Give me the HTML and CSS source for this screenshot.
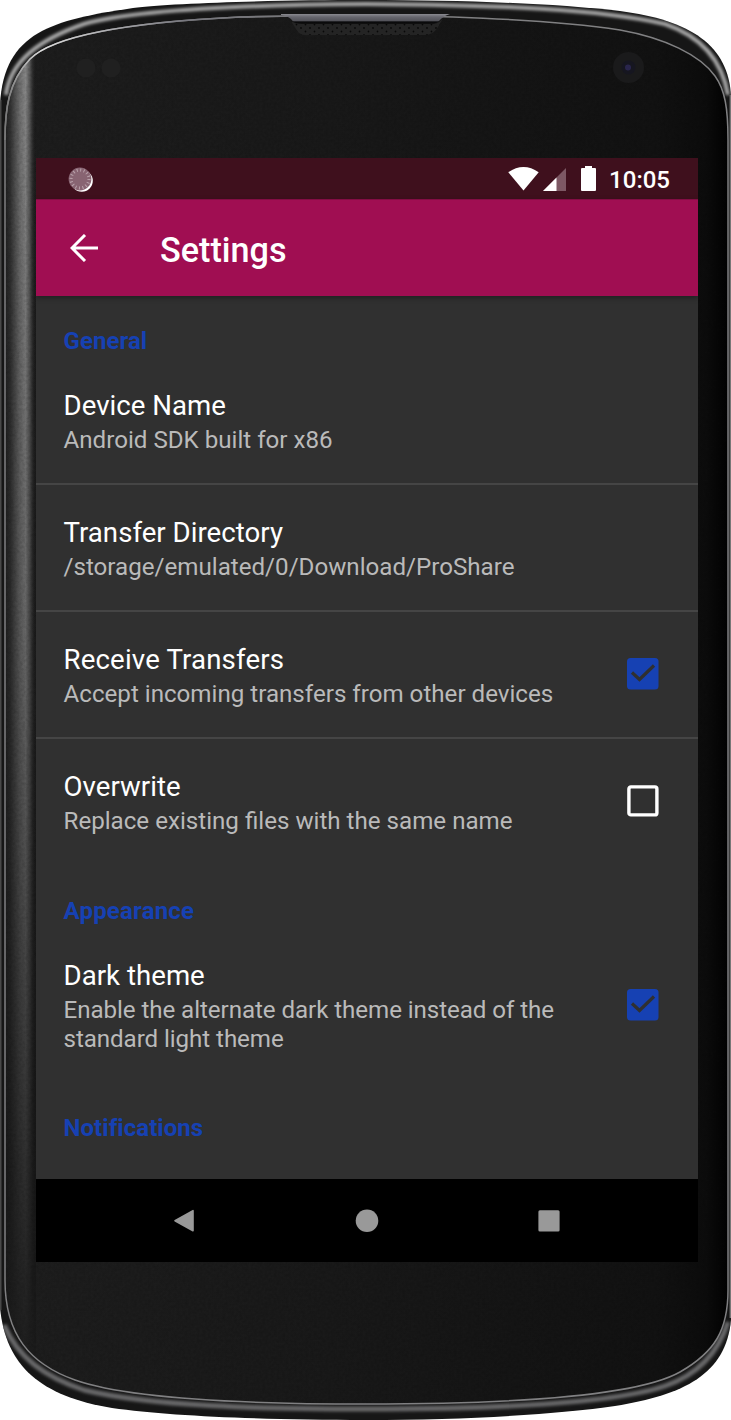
FILE: index.html
```html
<!DOCTYPE html>
<html lang="en">
<head>
<meta charset="utf-8">
<title>Settings</title>
<link rel="stylesheet" href="styles.css">
</head>
<body>
<div class="phone">
  <svg class="frame" viewBox="0 0 731 1420" aria-hidden="true">
    <defs>
      <clipPath id="body"><path d="M0 104C4 32 52 20 133 8C170 3 280 0 366 0C455 0 550 3 620 11C690 20 729 45 731 97V1320C726 1374 684 1395 615 1406C560 1414 470 1420 366 1420C260 1420 170 1416 112 1408C40 1396 6 1366 0 1308Z"/></clipPath>
      <path id="inner" d="M5 140C5 110 8 82 30 59C46 43 95 24 240 17C300 15.500 330 15.500 366 15.500C420 15.500 540 18 620 30C665 38 700 55 715 76C725 90 728 108 728 140V1290C728 1330 715 1352 680 1372C650 1389 570 1404 366 1404C220 1404 120 1396 75 1380C30 1364 5 1335 5 1280Z"/>
      <clipPath id="face"><use href="#inner"/></clipPath>
      <linearGradient id="glass"><stop stop-color="#1e1e1e"/><stop offset=".45" stop-color="#191919"/><stop offset=".9" stop-color="#121212"/><stop offset=".97" stop-color="#0c0c0c"/><stop offset="1" stop-color="#020202"/></linearGradient>
      <linearGradient id="side"><stop stop-color="#242424"/><stop offset=".15" stop-color="#343434"/><stop offset=".45" stop-color="#707070"/><stop offset=".65" stop-color="#898989"/><stop offset=".8" stop-color="#555"/><stop offset="1" stop-color="#1e1e1e" stop-opacity="0"/></linearGradient>
      <linearGradient id="fade" x2="0" y2="1"><stop stop-color="#000" stop-opacity="0"/><stop offset=".45" stop-color="#151515" stop-opacity=".3"/><stop offset=".85" stop-color="#151515" stop-opacity=".78"/><stop offset="1" stop-color="#1c1c1c"/></linearGradient>
      <linearGradient id="topline"><stop stop-color="#777"/><stop offset=".1" stop-color="#ddd"/><stop offset=".5" stop-color="#77777e"/><stop offset="1" stop-color="#777"/></linearGradient>
      <linearGradient id="bar" x2="0" y2="1"><stop stop-color="#8a8a90"/><stop offset=".3" stop-color="#66666e"/><stop offset=".65" stop-color="#55555c"/><stop offset=".8" stop-color="#08080a"/><stop offset="1" stop-color="#111"/></linearGradient>
      <filter id="soft" x="-10%" y="-10%" width="120%" height="120%"><feGaussianBlur stdDeviation="1.5"/></filter>
      <filter id="grain"><feTurbulence type="fractalNoise" baseFrequency=".35" numOctaves="2" seed="4"/><feColorMatrix values="0 0 0 0 0  0 0 0 0 0  0 0 0 0 0  1.1 0 0 0 -.35"/></filter>
      <pattern id="mesh" width="9" height="7" patternUnits="userSpaceOnUse" x="299" y="26"><rect width="9" height="7" fill="#242424"/><circle cx="2" cy="2" r=".9" fill="#080808"/><circle cx="6.500" cy="5.500" r=".9" fill="#080808"/></pattern>
    </defs>
    <g clip-path="url(#body)">
      <rect width="731" height="1420" fill="#161616"/>
      <g filter="url(#soft)" fill="none">
        <path d="M6 95C10 62 38 40 84 24C130 11 230 5 366 4" stroke="#aaa" stroke-width="4"/>
        <path d="M366 4C500 5 600 9 665 24C700 36 722 60 728 95" stroke="#aaa" stroke-width="4"/>
        <path d="M4 1325C18 1358 45 1377 84 1390C150 1406 260 1409 366 1409C530 1409 620 1401 665 1386C700 1374 719 1350 728 1322" stroke="#69696b" stroke-width="5"/>
      </g>
      <path d="M.8 100V1310" stroke="#555" stroke-width="1.200"/>
      <path d="M730.300 95V1318" stroke="#777" stroke-width="1.400"/>
      <use href="#inner" fill="url(#glass)"/>
      <g clip-path="url(#face)">
        <rect x="6" y="40" width="30" height="1340" fill="url(#side)"/>
        <rect x="6" y="40" width="30" height="1340" fill="url(#fade)"/>
        <rect x="34" y="20" width="690" height="1380" filter="url(#grain)" opacity=".22"/>
      </g>
      <use href="#inner" fill="none" stroke="#808082" stroke-width="1.500"/>
      <path d="M5 140C5 110 8 82 30 59C46 43 95 24 240 17C300 15.500 330 15.500 366 15.500" fill="none" stroke="url(#topline)" stroke-width="1.600"/>
      <path d="M281 14H450Q443 16 439 21Q436 24 430 24H302Q294 24 291 19Q288 16 281 15Z" fill="url(#bar)"/>
      <path d="M291 21Q294 24 302 24H434Q440 23 443 18L438 27Q433 35 425 35H306Q299 35 296 29Z" fill="url(#mesh)"/>
      <circle cx="86" cy="68" r="9.500" fill="#202020"/><circle cx="111" cy="68" r="9.500" fill="#202020"/>
      <circle cx="628.500" cy="67.500" r="15.500" fill="#1a1a1b"/><circle cx="628.500" cy="67.500" r="7" fill="#161620"/><circle cx="628" cy="67.500" r="3" fill="#29254c"/>
    </g>
  </svg>

  <main class="screen">
    <header class="status">
      <svg class="spinner" viewBox="0 0 26 26"><circle cx="13.800" cy="13.800" r="11" fill="#fff"/><circle cx="12" cy="12" r="11.400" fill="#886472"/><circle cx="12" cy="12" r="9" fill="none" stroke="#b9a2ab" stroke-width="3.200" stroke-dasharray="1 2.530"/></svg>
      <svg class="signals" viewBox="0 0 88 26" fill="#fff"><path d="M.3 6.200Q15.500-4.200 30.700 6.200L15.500 24.500Z"/><path d="M58 2V25H35Z" fill="#7d5864"/><path d="M48.500 11.500V25H35Z"/><path d="M77 0H84V2H87Q88 2 88 3V24Q88 25 87 25H74Q73 25 73 24V3Q73 2 74 2H77Z"/></svg>
      <span class="clock">10:05</span>
    </header>
    <div class="appbar">
      <svg class="back" viewBox="0 0 28 28" fill="none" stroke="#fff" stroke-width="3"><path d="M28 14H2M15 1L2 14L15 27"/></svg>
      <h1>Settings</h1>
    </div>
    <div class="list">
      <h2>General</h2>
      <section class="row first"><div><h3>Device Name</h3><p>Android SDK built for x86</p></div></section>
      <section class="row ruled"><div><h3>Transfer Directory</h3><p>/storage/emulated/0/Download/ProShare</p></div></section>
      <section class="row ruled"><div><h3 class="wide">Receive Transfers</h3><p>Accept incoming transfers from other devices</p></div>
        <svg class="check" viewBox="0 0 32 32"><rect width="31.500" height="31.500" rx="3.500" fill="#1641b3"/><path d="M5 14.500L12.500 21.500L27 7.500" fill="none" stroke="#303030" stroke-width="3.200"/></svg></section>
      <section class="row ruled"><div><h3>Overwrite</h3><p>Replace existing files with the same name</p></div>
        <svg class="check" viewBox="0 0 32 32"><rect x="1.900" y="1.900" width="28" height="28" rx="2" fill="none" stroke="#fff" stroke-width="3.400"/></svg></section>
      <h2 class="appearance">Appearance</h2>
      <section class="row tall"><div><h3>Dark theme</h3><p class="long">Enable the alternate dark theme instead of the<br>standard light theme</p></div>
        <svg class="check" viewBox="0 0 32 32"><rect width="31.500" height="31.500" rx="3.500" fill="#1641b3"/><path d="M5 14.500L12.500 21.500L27 7.500" fill="none" stroke="#303030" stroke-width="3.200"/></svg></section>
      <h2 class="notifications">Notifications</h2>
    </div>
    <nav class="nav">
      <svg viewBox="0 0 24 24"><path d="M3 11.700L21 1.700V21.700Z" stroke="#999" stroke-width="1.600" stroke-linejoin="round"/></svg>
      <svg viewBox="0 0 24 24"><circle cx="12" cy="11.700" r="11.300"/></svg>
      <svg viewBox="0 0 24 24"><rect x="1.400" y="1.200" width="21.200" height="21.200" rx="1.500"/></svg>
    </nav>
  </main>
</div>
</body>
</html>
```
FILE: styles.css
```css
* { box-sizing: border-box; }
body { margin: 0; background: #fff; font-family: Roboto, sans-serif; color: #fff; }
h1, h2, h3, p { margin: 0; }
svg { display: block; flex: none; }
.phone { position: relative; width: 731px; height: 1420px; padding: 158px 33px 158px 36px; overflow: hidden; }
.frame { position: absolute; inset: 0; width: 731px; height: 1420px; }
.screen { position: relative; height: 1104px; display: flex; flex-direction: column; background: #303030; overflow: hidden; }
.status { height: 41px; flex: none; display: flex; align-items: center; padding: 0 28px 0 32px; background: #3f101d; }
.spinner { width: 26px; height: 26px; margin-top: 2px; }
.signals { width: 88px; height: 26px; margin-left: auto; margin-top: 1px; }
.clock { margin: 3px 0 0 13.5px; font-size: 24px; line-height: 28px; font-weight: 500; }
.appbar { height: 97px; flex: none; display: flex; align-items: center; padding-left: 34px; gap: 62px; background: #a00e52; border-top: 1px solid #830d44; box-shadow: 0 2px 5px rgba(0, 0, 0, .35); position: relative; }
.back { width: 28px; height: 28px; }
h1 { font-size: 34.2px; line-height: 42px; font-weight: 500; padding-top: 3px; }
.list { flex: 1; min-height: 0; padding-top: 31px; }
h2 { font-size: 24px; line-height: 28px; font-weight: 700; color: #1641b3; padding-left: 27.5px; letter-spacing: .05px; }
h2.appearance { margin-top: 33px; letter-spacing: .2px; }
h2.notifications { margin-top: 29px; }
.row { height: 127px; display: flex; align-items: center; justify-content: space-between; padding: 0 39px 0 27.5px; }
.row > div { padding-top: 5px; }
.row.first { height: 128px; }
.row.ruled { border-top: 2px solid #454545; padding-bottom: 2px; }
.row.tall { height: 160px; }
.row.tall > div { padding-top: 2px; }
h3 { font-size: 27.6px; line-height: 34px; font-weight: 400; letter-spacing: .03px; }
h3.wide { letter-spacing: .17px; }
p { font-size: 24.15px; line-height: 28.5px; color: #bababa; padding-top: 3px; }
p.long { letter-spacing: -.07px; }
.check { width: 32px; height: 32px; }
.nav { height: 83px; flex: none; display: flex; align-items: center; justify-content: space-between; padding: 0 137px 0 136px; background: #000; }
.nav svg { width: 24px; height: 24px; fill: #999; }
```
